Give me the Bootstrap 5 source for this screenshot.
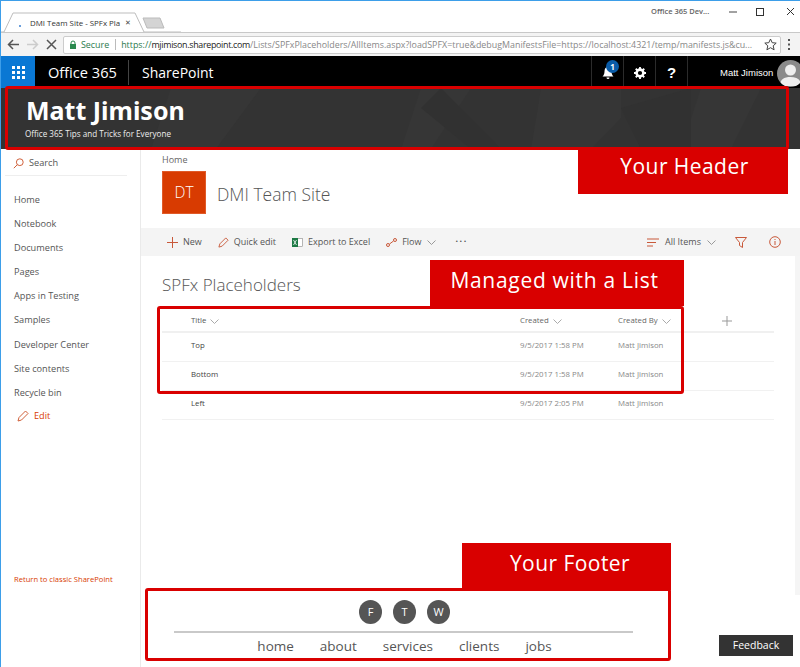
<!DOCTYPE html>
<html lang="en">
<head>
<meta charset="utf-8">
<title>DMI Team Site - SPFx Placeholders</title>
<link href="https://cdn.jsdelivr.net/npm/bootstrap@5.3.0/dist/css/bootstrap.min.css" rel="stylesheet">
<style>
html,body{height:100%;overflow:hidden;background:#fff}
body{font-family:"Open Sans","Liberation Sans",sans-serif;color:#444}
.shot{width:800px;height:667px;position:relative;overflow:hidden;border-top:1px solid #3d9ee9;border-left:1px solid #3d9ee9}
.tabstrip{height:31px;background:#fff;position:relative;flex:none}
.tabshape{position:absolute;left:0;top:0}
.tabtitle{position:absolute;left:29px;top:15px;font-size:7.9px;line-height:14px;color:#333;white-space:nowrap}
.tabx{position:absolute;left:124px;top:15px;font-size:7px;line-height:14px;color:#444}
.winctl{position:absolute;left:650px;top:5px;font-size:7.5px;line-height:10px;color:#666;font-weight:600}
.wbtn{position:absolute;top:5px}
.toolbar{height:24px;background:#f3f3f3;border-top:1px solid #c8c8c8;flex:none;padding-left:5px;gap:4px}
.navic{width:15px;height:15px;flex:none}
.addr{width:718px;height:18px;flex:none;background:#fff;border:1px solid #ccc;border-radius:2px;font-size:8.9px;white-space:nowrap;overflow:hidden;padding-left:4px;padding-right:2px;color:#888}
.lock{flex:none;margin-left:1px}
.secure{color:#2a7a4e;margin-left:4px;padding-right:6px;border-right:1px solid #bbb;margin-right:5px;line-height:11px;flex:none}
.url-green{color:#2a7a4e}
.url-dark{color:#222;letter-spacing:-.3px}
.urltext{overflow:hidden;min-width:0;flex:1 1 auto}
.kebab{flex:none;margin-left:3px}
.suite{height:32px;background:#000;color:#fff;flex:none}
.waffle{width:34px;height:32px;background:#0a78d4;flex:none}
.o365{font-size:14.6px;width:94px;padding-left:13px;border-right:1px solid #444;line-height:25px}
.sp{font-size:14px;padding-left:13px;line-height:25px}
.suitecell{width:32px;height:32px;border-left:1px solid #2b2b2b;flex:none;padding-top:2px}
.suitecell.q{font-size:15px;font-weight:700;font-family:"Liberation Sans",sans-serif}
.bellwrap{position:relative}
.bellbadge{position:absolute;left:14px;top:4px;width:13px;height:13px;border-radius:50%;background:#0a5ca8;color:#fff;font-size:8px;line-height:13px;text-align:center;font-weight:700}
.userblock{width:113px;height:32px;border-left:1px solid #2b2b2b;flex:none;overflow:hidden;padding-top:2px}
.uname{font-size:9.5px;font-family:"Liberation Sans",sans-serif;margin-left:32px;margin-right:4px;white-space:nowrap}
.avatar{width:27px;height:27px;border-radius:50%;background:#8a8a8a;flex:none;overflow:hidden}
.hero{height:61px;background:#333;color:#fff;position:relative;flex:none;overflow:hidden;padding:8px 0 0 25px}
.heropat{position:absolute;left:0;top:0}
.herot{font-size:25px;font-weight:700;line-height:28px;position:relative;font-family:"Noto Sans",sans-serif}
.heros{font-size:8.1px;line-height:13px;position:relative;margin-top:3px;margin-left:-1px;color:#eee}
.bodyrow{height:518px;min-height:0}
.leftnav{width:140px;flex:none;border-right:1px solid #eaeaea;font-size:9.2px;position:relative;color:#555}
.searchrow{height:27px;margin:0 13px 0 4px;padding:2px 0 0 8px;border-bottom:1px solid #eee;gap:5px}
.navlist{padding:12px 0 0 13px;margin:0;list-style:none}
.navlist li{height:24.1px;line-height:24px}
.editlink{color:#d83b01;gap:5px;height:22px;margin-left:16px}
.classic{position:absolute;left:13px;top:424px;font-size:7.6px;color:#d83b01;line-height:12px;white-space:nowrap}
.mainarea{position:relative;min-width:0}
.crumb{font-size:9px;color:#666;padding:5px 0 0 21px;line-height:12px}
.siterow{padding:5px 0 0 21px;height:62px;align-items:flex-start}
.sitelogo{width:44px;height:43px;background:#d83b01;color:#fff;font-size:15.5px;font-weight:300;border:1px solid #e05a28}
.sitename{font-size:17.5px;color:#555;margin-left:11px;line-height:46px;font-weight:300}
.cmdbar{height:28px;background:#f4f4f4;padding-left:26px;padding-right:19px;font-size:9px;color:#555;white-space:nowrap}
.cmd{gap:5px;margin-right:16px}
.ellip{letter-spacing:1.5px;line-height:8px;margin-top:-3px;font-weight:700}
.viewsw{gap:6px;margin-right:19px}
.filt{margin-right:22px}
.listtitle{font-size:17px;font-weight:300;color:#555;line-height:25px;margin:16px 0 0 21px}
.listwrap{margin:9px 0 0 21px;width:612px;position:relative}
table.splist{table-layout:fixed;width:612px;margin:0;font-size:7.8px;color:#666;--bs-table-bg:transparent}
table.splist th,table.splist td{padding:0;border-bottom:1px solid #f1f1f1;font-weight:400;vertical-align:middle;white-space:nowrap}
table.splist th{height:26px;padding-top:4px;border-bottom:2px solid #f0f0f0}
table.splist td{height:29px;padding-bottom:2px}
table.splist td.ttl{color:#444;padding-left:29px}
table.splist th.ttl{padding-left:29px;color:#555}
table.splist .mut{color:#888}
.chev{margin-left:4px;vertical-align:-1px}
.addcol{margin-left:-5px}
.foot{position:relative;width:526px;height:73px;margin:auto 0 6px 4px;border:3px solid #d90000;border-radius:3px;background:#fff;flex:none;padding:9px 35px 0 26px}
.social{gap:11px;height:25px;padding-left:2px}
.socbtn{width:23px;height:24px;border-radius:50%;background:#555;color:#fff;font-size:11px;line-height:24px;text-align:center}
.footnav{border-top:2px solid #c9c9c9;margin-top:6px;padding-top:3px;padding-left:2px;font-size:13.5px;line-height:20px;color:#555;gap:26px}
.vscroll{position:absolute;right:0;top:107px;width:5px;height:339px;background:#f5f5f5}
.frame{position:absolute;border:3px solid #d90000;border-radius:3px;pointer-events:none}
.tag{position:absolute;background:#d90000;color:#fff;text-align:center;font-size:21px;letter-spacing:.45px}
.tag-h{left:577px;top:147px;width:210px;height:46px;line-height:36px;padding-left:3px}
.tag-l{left:429px;top:259px;width:254px;height:46px;line-height:40px;letter-spacing:.7px;padding-right:5px}
.tag-f{left:461px;top:542px;width:209px;height:47px;line-height:40px;padding-left:7px}
.fr-h{left:4px;top:85px;width:784px;height:64px}
.fr-l{left:156px;top:305px;width:527px;height:88px}
.feedback{position:absolute;left:718px;top:634px;width:74px;height:21px;background:#333;color:#fff;font-size:10.5px;line-height:21px;text-align:center}
</style>
</head>
<body class="m-0">
<div class="shot d-flex flex-column">
  <div class="tabstrip">
    <svg class="tabshape" width="180" height="31" viewBox="0 0 180 31"><path d="M0 31H3L12 12H134L143 31H800" fill="#fff" stroke="#bdbdbd"/><path d="M142 17H159L163 27H146Z" fill="#d4d4d4" stroke="#bbb"/><circle cx="19" cy="25" r="1" fill="#3a7fd0"/></svg>
    <span class="tabtitle">DMI Team Site - SPFx Pla</span>
    <span class="tabx">✕</span>
    <span class="winctl">Office 365 Dev...</span>
    <svg class="wbtn" style="left:725px" width="70" height="12" viewBox="0 0 70 12"><path d="M3 6H11" stroke="#444"/><rect x="30.500" y="2.500" width="7" height="7" fill="none" stroke="#333"/><path d="M61 2l7 7M68 2l-7 7" stroke="#333"/></svg>
  </div>
  <div class="toolbar d-flex align-items-center">
    <svg class="navic" viewBox="0 0 15 15"><path d="M13 7.500H3M7 3L2.500 7.500L7 12" fill="none" stroke="#555" stroke-width="1.500"/></svg>
    <svg class="navic" viewBox="0 0 15 15"><path d="M2 7.500H12M8 3L12.500 7.500L8 12" fill="none" stroke="#ccc" stroke-width="1.500"/></svg>
    <svg class="navic" viewBox="0 0 15 15"><path d="M3 3L12 12M12 3L3 12" fill="none" stroke="#555" stroke-width="1.500"/></svg>
    <div class="addr d-flex align-items-center">
      <svg class="lock" width="8" height="10" viewBox="0 0 8 10"><path d="M2 4V3a2 2 0 0 1 4 0v1" fill="none" stroke="#2a8a4e"/><rect x="1" y="4" width="6" height="5" fill="#2a8a4e"/></svg>
      <span class="secure">Secure</span>
      <span class="urltext"><span class="url-green">https://</span><span class="url-dark">mjimison.sharepoint.com</span>/Lists/SPFxPlaceholders/AllItems.aspx?loadSPFX=true&amp;debugManifestsFile=https://localhost:4321/temp/manifests.js&amp;cu...</span>
      <svg class="navic" viewBox="0 0 15 15"><path d="M7.500 2l1.700 3.700 4 .4-3 2.700.9 4-3.600-2.100-3.600 2.100.9-4-3-2.700 4-.4Z" fill="none" stroke="#444"/></svg>
    </div>
    <svg class="kebab" width="3" height="11" viewBox="0 0 3 11" fill="#555"><rect x="0" y="0" width="2" height="2"/><rect x="0" y="4.500" width="2" height="2"/><rect x="0" y="9" width="2" height="2"/></svg>
  </div>
  <div class="suite d-flex">
    <div class="waffle d-flex align-items-center justify-content-center"><svg width="13" height="13" viewBox="0 0 13 13" fill="#fff"><rect width="3" height="3"/><rect x="5" width="3" height="3"/><rect x="10" width="3" height="3"/><rect y="5" width="3" height="3"/><rect x="5" y="5" width="3" height="3"/><rect x="10" y="5" width="3" height="3"/><rect y="10" width="3" height="3"/><rect x="5" y="10" width="3" height="3"/><rect x="10" y="10" width="3" height="3"/></svg></div>
    <div class="d-flex align-items-center"><div class="o365">Office 365</div><div class="sp">SharePoint</div></div>
    <div class="ms-auto d-flex">
      <div class="suitecell bellwrap d-flex align-items-center justify-content-center"><svg width="12" height="14" viewBox="0 0 12 14" fill="#fff"><path d="M6 1C3.500 1 2.500 3 2.500 5.500C2.500 8 1.500 9.500 .5 10.500H11.500C10.500 9.500 9.500 8 9.500 5.500C9.500 3 8.500 1 6 1Z"/><path d="M4.500 11.500a1.500 1.500 0 0 0 3 0Z"/></svg><span class="bellbadge">1</span></div>
      <div class="suitecell d-flex align-items-center justify-content-center"><svg width="12" height="12" viewBox="0 0 13 13"><circle cx="6.500" cy="6.500" r="3.700" fill="none" stroke="#fff" stroke-width="2.800"/><path d="M6.500 0v2.500M6.500 10.500V13M0 6.500h2.500M10.500 6.500H13M1.900 1.900l1.800 1.800M9.300 9.300l1.800 1.800M11.100 1.900L9.300 3.700M3.700 9.300l-1.800 1.800" stroke="#fff" stroke-width="2"/></svg></div>
      <div class="suitecell q d-flex align-items-center justify-content-center">?</div>
      <div class="userblock d-flex align-items-center"><span class="uname">Matt Jimison</span><div class="avatar"><svg width="27" height="27" viewBox="0 0 27 27" fill="#eee"><circle cx="13.500" cy="10" r="5.500"/><path d="M3 26c0-7 4-9 10.500-9S24 19 24 26Z"/></svg></div></div>
    </div>
  </div>
  <div class="hero">
    <svg class="heropat" width="800" height="61" viewBox="0 0 800 61"><g fill="#363636"><path d="M170 0H260L215 61H150Z"/><path d="M420 0H470L430 61H400Z"/><path d="M540 0H620V30L590 61H530Z"/><path d="M700 0H760L730 61H680Z"/></g><g fill="#313131"><path d="M440 0L500 61H470L420 20Z"/><path d="M620 20L690 0V61H640Z"/></g></svg>
    <div class="herot">Matt Jimison</div>
    <div class="heros">Office 365 Tips and Tricks for Everyone</div>
  </div>
  <div class="bodyrow d-flex">
    <nav class="leftnav">
      <div class="searchrow d-flex align-items-center"><svg width="11" height="11" viewBox="0 0 11 11"><circle cx="6.800" cy="4.200" r="3.400" fill="none" stroke="#d0603a"/><path d="M4.300 6.700L.8 10.200" stroke="#d0603a"/></svg><span>Search</span></div>
      <ul class="navlist">
        <li>Home</li><li>Notebook</li><li>Documents</li><li>Pages</li><li>Apps in Testing</li><li>Samples</li><li>Developer Center</li><li>Site contents</li><li>Recycle bin</li>
      </ul>
      <div class="editlink d-flex align-items-center"><svg width="12" height="12" viewBox="0 0 12 12"><path d="M1 11L2 7.500L8.500 1L11 3.500L4.500 10Z" fill="none" stroke="#d0603a"/></svg><span>Edit</span></div>
      <div class="classic">Return to classic SharePoint</div>
    </nav>
    <main class="mainarea flex-grow-1 d-flex flex-column">
      <div class="crumb">Home</div>
      <div class="siterow d-flex">
        <div class="sitelogo d-flex align-items-center justify-content-center">DT</div>
        <div class="sitename">DMI Team Site</div>
      </div>
      <div class="cmdbar d-flex align-items-center">
        <div class="cmd d-flex align-items-center"><svg width="11" height="11" viewBox="0 0 11 11"><path d="M5.500 0V11M0 5.500H11" stroke="#c8593a"/></svg><span>New</span></div>
        <div class="cmd d-flex align-items-center"><svg width="11" height="11" viewBox="0 0 12 12"><path d="M1 11L2 7.500L8.500 1L11 3.500L4.500 10Z" fill="none" stroke="#c8593a"/></svg><span>Quick edit</span></div>
        <div class="cmd d-flex align-items-center"><svg width="11" height="11" viewBox="0 0 11 11"><rect x="4" y="1.500" width="6.500" height="8" fill="#fff" stroke="#888" stroke-width=".6"/><rect x="0" y="1" width="6" height="9" fill="#1d7a45"/><path d="M1.500 3l3 5M4.500 3l-3 5" stroke="#fff" stroke-width=".8"/></svg><span>Export to Excel</span></div>
        <div class="cmd d-flex align-items-center"><svg width="11" height="11" viewBox="0 0 11 11"><circle cx="2" cy="8" r="1.500" fill="none" stroke="#c8593a"/><circle cx="9" cy="3" r="1.500" fill="none" stroke="#c8593a"/><path d="M3.500 7L7.500 4" stroke="#c8593a"/></svg><span>Flow</span><svg width="9" height="5" viewBox="0 0 9 5"><path d="M.5.500L4.500 4.500L8.500.5" fill="none" stroke="#999"/></svg></div>
        <div class="cmd ms-1 ellip">···</div>
        <div class="ms-auto d-flex align-items-center">
          <div class="viewsw d-flex align-items-center"><svg width="12" height="9" viewBox="0 0 12 9"><path d="M0 1H12M0 4.500H9M0 8H6" stroke="#c8593a"/></svg><span>All Items</span><svg width="9" height="5" viewBox="0 0 9 5"><path d="M.5.500L4.500 4.500L8.500.5" fill="none" stroke="#999"/></svg></div>
          <svg class="filt" width="12" height="11" viewBox="0 0 12 11"><path d="M.5.500H11.500L7.500 5.500V10.500L4.500 8.500V5.500Z" fill="none" stroke="#c8593a"/></svg>
          <svg width="12" height="12" viewBox="0 0 12 12"><circle cx="6" cy="6" r="5.300" fill="none" stroke="#c8593a"/><path d="M6 5V9M6 3V4" stroke="#c8593a"/></svg>
        </div>
      </div>
      <div class="listtitle">SPFx Placeholders</div>
      <div class="listwrap">
        <table class="table splist">
          <colgroup><col style="width:358px"><col style="width:98px"><col style="width:109px"><col style="width:47px"></colgroup>
          <thead><tr>
            <th class="ttl">Title<svg class="chev" width="9" height="5" viewBox="0 0 9 5"><path d="M.5.500L4.500 4.500L8.500.5" fill="none" stroke="#aaa"/></svg></th>
            <th>Created<svg class="chev" width="9" height="5" viewBox="0 0 9 5"><path d="M.5.500L4.500 4.500L8.500.5" fill="none" stroke="#aaa"/></svg></th>
            <th>Created By<svg class="chev" width="9" height="5" viewBox="0 0 9 5"><path d="M.5.500L4.500 4.500L8.500.5" fill="none" stroke="#aaa"/></svg></th>
            <th><svg class="addcol" width="10" height="10" viewBox="0 0 10 10"><path d="M5 0V10M0 5H10" stroke="#999"/></svg></th>
          </tr></thead>
          <tbody>
            <tr><td class="ttl">Top</td><td class="mut">9/5/2017 1:58 PM</td><td class="mut">Matt Jimison</td><td></td></tr>
            <tr><td class="ttl">Bottom</td><td class="mut">9/5/2017 1:58 PM</td><td class="mut">Matt Jimison</td><td></td></tr>
            <tr><td class="ttl">Left</td><td class="mut">9/5/2017 2:05 PM</td><td class="mut">Matt Jimison</td><td></td></tr>
          </tbody>
        </table>
      </div>
      <footer class="foot">
        <div class="social d-flex justify-content-center"><span class="socbtn">F</span><span class="socbtn">T</span><span class="socbtn">W</span></div>
        <div class="footnav d-flex justify-content-center"><span>home</span><span>about</span><span>services</span><span>clients</span><span>jobs</span></div>
      </footer>
      <div class="vscroll"></div>
    </main>
  </div>
  <div class="frame fr-h"></div>
  <div class="tag tag-h">Your Header</div>
  <div class="tag tag-l">Managed with a List</div>
  <div class="frame fr-l"></div>
  <div class="tag tag-f">Your Footer</div>
  <div class="feedback">Feedback</div>
</div>
</body>
</html>
